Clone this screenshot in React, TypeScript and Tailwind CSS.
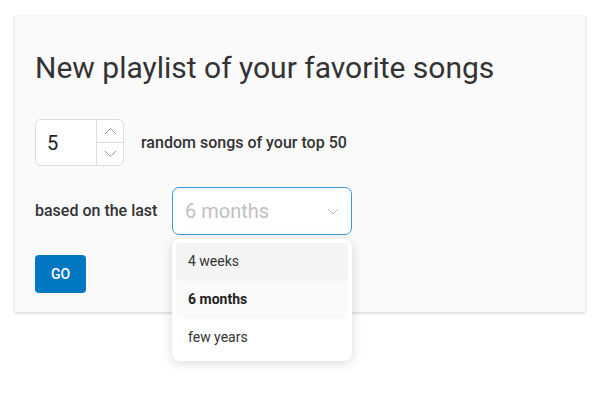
import React from "react";

export default function App() {
  return (
    <div className="w-[602px] h-[415px] bg-white relative" style={{ fontFamily: "Roboto, 'Noto Sans', sans-serif" }}>
      <div className="absolute left-[15px] top-[16px] w-[570px] h-[296px] bg-[#fafafa] shadow-[0_1px_3px_rgba(0,0,0,0.2)] px-[20px] pt-[34px]">
        <h1 className="text-[30px] leading-[36px] text-[#333] font-normal">New playlist of your favorite songs</h1>
        <div className="flex items-center mt-[33px] h-[47px]">
          <div className="flex w-[89px] h-[47px] border border-[#ddd] rounded-[6px] bg-white">
            <div className="flex-1 flex items-center pl-[11px] text-[20px] text-[#222]">5</div>
            <div className="w-[27px] border-l border-[#ddd] flex flex-col">
              <div className="flex-1 flex items-center justify-center border-b border-[#ddd]">
                <svg width="13" height="8" viewBox="0 0 13 8" fill="none" stroke="#999" strokeWidth="1"><path d="M1 7L6.5 1.5L12 7" /></svg>
              </div>
              <div className="flex-1 flex items-center justify-center">
                <svg width="13" height="8" viewBox="0 0 13 8" fill="none" stroke="#999" strokeWidth="1"><path d="M1 1L6.5 6.5L12 1" /></svg>
              </div>
            </div>
          </div>
          <span className="ml-[17px] text-[16px] font-medium text-[#333]">random songs of your top 50</span>
        </div>
        <div className="flex items-center mt-[21px] h-[48px]">
          <span className="text-[16px] font-medium text-[#333] w-[137px]">based on the last</span>
          <div className="relative">
            <div className="w-[180px] h-[48px] border border-[#3a9ad9] rounded-[7px] bg-white flex items-center pl-[12px] pr-[12px] justify-between">
              <span className="text-[20px] text-[#c0c0c0]">6 months</span>
              <svg width="12" height="7" viewBox="0 0 12 7" fill="none" stroke="#bbb" strokeWidth="1"><path d="M1 1L6 6L11 1" /></svg>
            </div>
            <div className="absolute left-0 top-[52px] w-[180px] bg-white rounded-[8px] shadow-[0_2px_12px_rgba(0,0,0,0.15)] p-[4px] z-10">
              <div className="h-[38px] rounded-[4px] bg-[#f4f4f4] flex items-center pl-[12px] pb-[2px] text-[14px] text-[#333]">4 weeks</div>
              <div className="h-[38px] rounded-[4px] bg-[#fafafa] flex items-center pl-[12px] pb-[2px] text-[14px] font-bold text-[#222]">6 months</div>
              <div className="h-[38px] rounded-[4px] flex items-center pl-[12px] pb-[2px] text-[14px] text-[#333]">few years</div>
            </div>
          </div>
        </div>
        <button className="mt-[20px] w-[51px] h-[38px] rounded-[4px] bg-[#0077c0] text-white text-[14px] font-medium flex items-center justify-center">GO</button>
      </div>
    </div>
  );
}
